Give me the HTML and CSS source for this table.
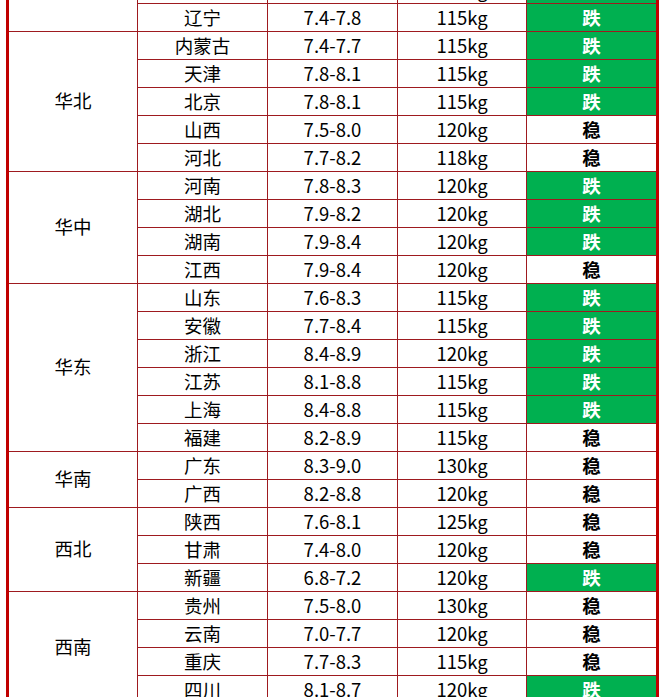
FILE: index.html
```html
<!DOCTYPE html>
<html lang="zh-CN">
<head>
<meta charset="utf-8">
<link rel="stylesheet" href="styles.css">
</head>
<body>
<div class="sheet">
<table class="grid">
<colgroup><col class="c1"><col class="c2"><col class="c3"><col class="c4"><col class="c5"></colgroup>
<tbody>
<tr><td class="region" rowspan="3">东北</td><td>黑龙江</td><td>7.3-7.8</td><td>115kg</td><td class="down">跌</td></tr>
<tr><td>吉林</td><td>7.4-7.8</td><td>115kg</td><td class="down">跌</td></tr>
<tr><td>辽宁</td><td>7.4-7.8</td><td>115kg</td><td class="down">跌</td></tr>

<tr><td class="region" rowspan="5">华北</td><td>内蒙古</td><td>7.4-7.7</td><td>115kg</td><td class="down">跌</td></tr>
<tr><td>天津</td><td>7.8-8.1</td><td>115kg</td><td class="down">跌</td></tr>
<tr><td>北京</td><td>7.8-8.1</td><td>115kg</td><td class="down">跌</td></tr>
<tr><td>山西</td><td>7.5-8.0</td><td>120kg</td><td class="flat">稳</td></tr>
<tr><td>河北</td><td>7.7-8.2</td><td>118kg</td><td class="flat">稳</td></tr>

<tr><td class="region" rowspan="4">华中</td><td>河南</td><td>7.8-8.3</td><td>120kg</td><td class="down">跌</td></tr>
<tr><td>湖北</td><td>7.9-8.2</td><td>120kg</td><td class="down">跌</td></tr>
<tr><td>湖南</td><td>7.9-8.4</td><td>120kg</td><td class="down">跌</td></tr>
<tr><td>江西</td><td>7.9-8.4</td><td>120kg</td><td class="flat">稳</td></tr>

<tr><td class="region" rowspan="6">华东</td><td>山东</td><td>7.6-8.3</td><td>115kg</td><td class="down">跌</td></tr>
<tr><td>安徽</td><td>7.7-8.4</td><td>115kg</td><td class="down">跌</td></tr>
<tr><td>浙江</td><td>8.4-8.9</td><td>120kg</td><td class="down">跌</td></tr>
<tr><td>江苏</td><td>8.1-8.8</td><td>115kg</td><td class="down">跌</td></tr>
<tr><td>上海</td><td>8.4-8.8</td><td>115kg</td><td class="down">跌</td></tr>
<tr><td>福建</td><td>8.2-8.9</td><td>115kg</td><td class="flat">稳</td></tr>

<tr><td class="region" rowspan="2">华南</td><td>广东</td><td>8.3-9.0</td><td>130kg</td><td class="flat">稳</td></tr>
<tr><td>广西</td><td>8.2-8.8</td><td>120kg</td><td class="flat">稳</td></tr>

<tr><td class="region" rowspan="3">西北</td><td>陕西</td><td>7.6-8.1</td><td>125kg</td><td class="flat">稳</td></tr>
<tr><td>甘肃</td><td>7.4-8.0</td><td>120kg</td><td class="flat">稳</td></tr>
<tr><td>新疆</td><td>6.8-7.2</td><td>120kg</td><td class="down">跌</td></tr>

<tr><td class="region" rowspan="4">西南</td><td>贵州</td><td>7.5-8.0</td><td>130kg</td><td class="flat">稳</td></tr>
<tr><td>云南</td><td>7.0-7.7</td><td>120kg</td><td class="flat">稳</td></tr>
<tr><td>重庆</td><td>7.7-8.3</td><td>115kg</td><td class="flat">稳</td></tr>
<tr><td>四川</td><td>8.1-8.7</td><td>120kg</td><td class="down">跌</td></tr>
</tbody>
</table>
</div>
</body>
</html>
```

FILE: styles.css
```css
html, body {
  margin: 0;
  padding: 0;
  background: #ffffff;
}

.sheet {
  margin-left: 6px;
  width: 647px;
  height: 697px;
  overflow: hidden;
  border-left: 3px solid #c00000;
  border-right: 3px solid #c00000;
}

.grid {
  margin-top: -52px;
  border-collapse: separate;
  border-spacing: 0;
  table-layout: fixed;
  width: 647px;
  font-family: "Noto Sans CJK SC", "Microsoft YaHei", sans-serif;
  font-size: 18.5px;
  color: #000000;
}

.c1 { width: 129px; }
.c2 { width: 130px; }
.c3 { width: 130px; }
.c4 { width: 129px; }
.c5 { width: 129px; }

.grid td {
  box-sizing: border-box;
  height: 28px;
  padding: 0 0 1px 0;
  line-height: 24px;
  text-align: center;
  vertical-align: middle;
  border-right: 1px solid #9e1a1f;
  border-bottom: 1px solid #9e1a1f;
  white-space: nowrap;
  overflow: hidden;
}

.grid td:last-child {
  border-right: none;
}

.grid td.region {
  padding: 0 0 3px 0;
}

.grid td.down {
  background: #00b050;
  color: #ffffff;
  font-weight: bold;
}

.grid td.flat {
  font-weight: bold;
}
```
